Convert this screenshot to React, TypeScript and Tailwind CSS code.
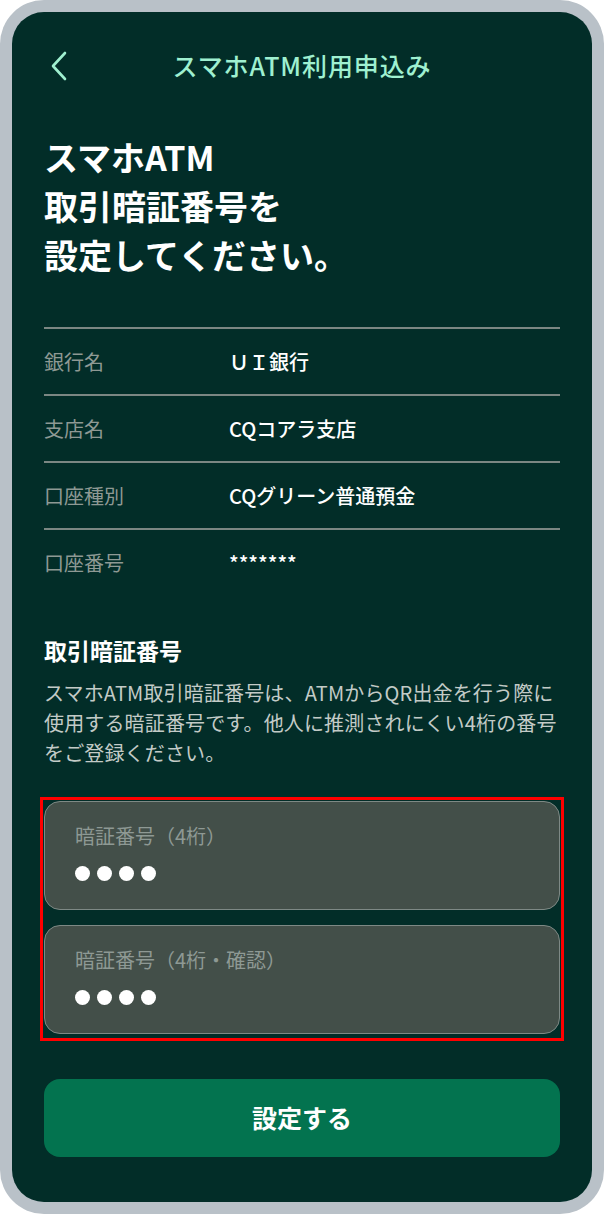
import React from 'react';

const rows = [
  { label: '銀行名', value: 'ＵＩ銀行' },
  { label: '支店名', value: 'CQコアラ支店' },
  { label: '口座種別', value: 'CQグリーン普通預金' },
  { label: '口座番号', value: '*******' },
];

const PinField: React.FC<{ label: string }> = ({ label }) => (
  <div className="h-[109px] rounded-[16px] border border-[#7e8985] bg-[#434f49] pl-[30px] pt-[20px]">
    <div className="text-[20px] leading-[28px] text-[#8e9994]">{label}</div>
    <div className="mt-[16px] flex gap-[7px]">
      {[0, 1, 2, 3].map((i) => (
        <span key={i} className="h-[15px] w-[15px] rounded-full bg-white" />
      ))}
    </div>
  </div>
);

const App: React.FC = () => {
  return (
    <div
      className="h-[1214px] w-[604px] bg-white"
      style={{ fontFamily: '"Noto Sans CJK JP", "Noto Sans", sans-serif' }}
    >
      <div className="h-full rounded-[44px] bg-[#b9c1c8] p-[12px]">
        <div className="flex h-full flex-col rounded-[32px] bg-[#022d28] px-[32px] pt-[27px]">
          {/* header */}
          <div className="grid h-[54px] grid-cols-[40px_1fr_40px] items-center">
            <svg width="22" height="30" viewBox="0 0 22 30" fill="none" className="ml-[4px]">
              <path d="M17 2 L5 15 L17 28" stroke="#9ff0d0" strokeWidth="2.6" strokeLinecap="round" strokeLinejoin="round" />
            </svg>
            <div className="text-center text-[25px] font-medium tracking-[0.9px] text-[#9ff0d0]">スマホATM利用申込み</div>
            <div />
          </div>

          <h1 className="mt-[39px] text-[34px] font-bold leading-[49px] text-white">
            スマホATM
            <br />
            取引暗証番号を
            <br />
            設定してください。
          </h1>

          {/* account info */}
          <div className="mt-[48px]">
            {rows.map((r) => (
              <div key={r.label} className="flex h-[67px] items-center border-t-2 border-[#7b8783]">
                <div className="w-[185px] text-[20px] text-[#8e9994]">{r.label}</div>
                <div className="text-[20px] font-medium text-white">{r.value}</div>
              </div>
            ))}
          </div>

          <h2 className="mt-[39px] text-[23px] font-bold leading-[32px] text-white">取引暗証番号</h2>
          <p className="mt-[12px] whitespace-nowrap text-[20px] leading-[30px] tracking-[0.15px] text-[#c3cbc7]">
            スマホATM取引暗証番号は、ATMからQR出金を行う際に
            <br />
            使用する暗証番号です。他人に推測されにくい4桁の番号
            <br />
            をご登録ください。
          </p>

          <div className="-mx-[4px] mt-[29px] flex flex-col gap-[15px] border-[3px] border-[#ff0000] px-px pt-px pb-[4px]">
            <PinField label="暗証番号（4桁）" />
            <PinField label="暗証番号（4桁・確認）" />
          </div>

          <button className="mt-[38px] h-[78px] w-full rounded-[16px] bg-[#03734f] text-[25px] font-bold text-white">
            設定する
          </button>
        </div>
      </div>
    </div>
  );
};

export default App;
